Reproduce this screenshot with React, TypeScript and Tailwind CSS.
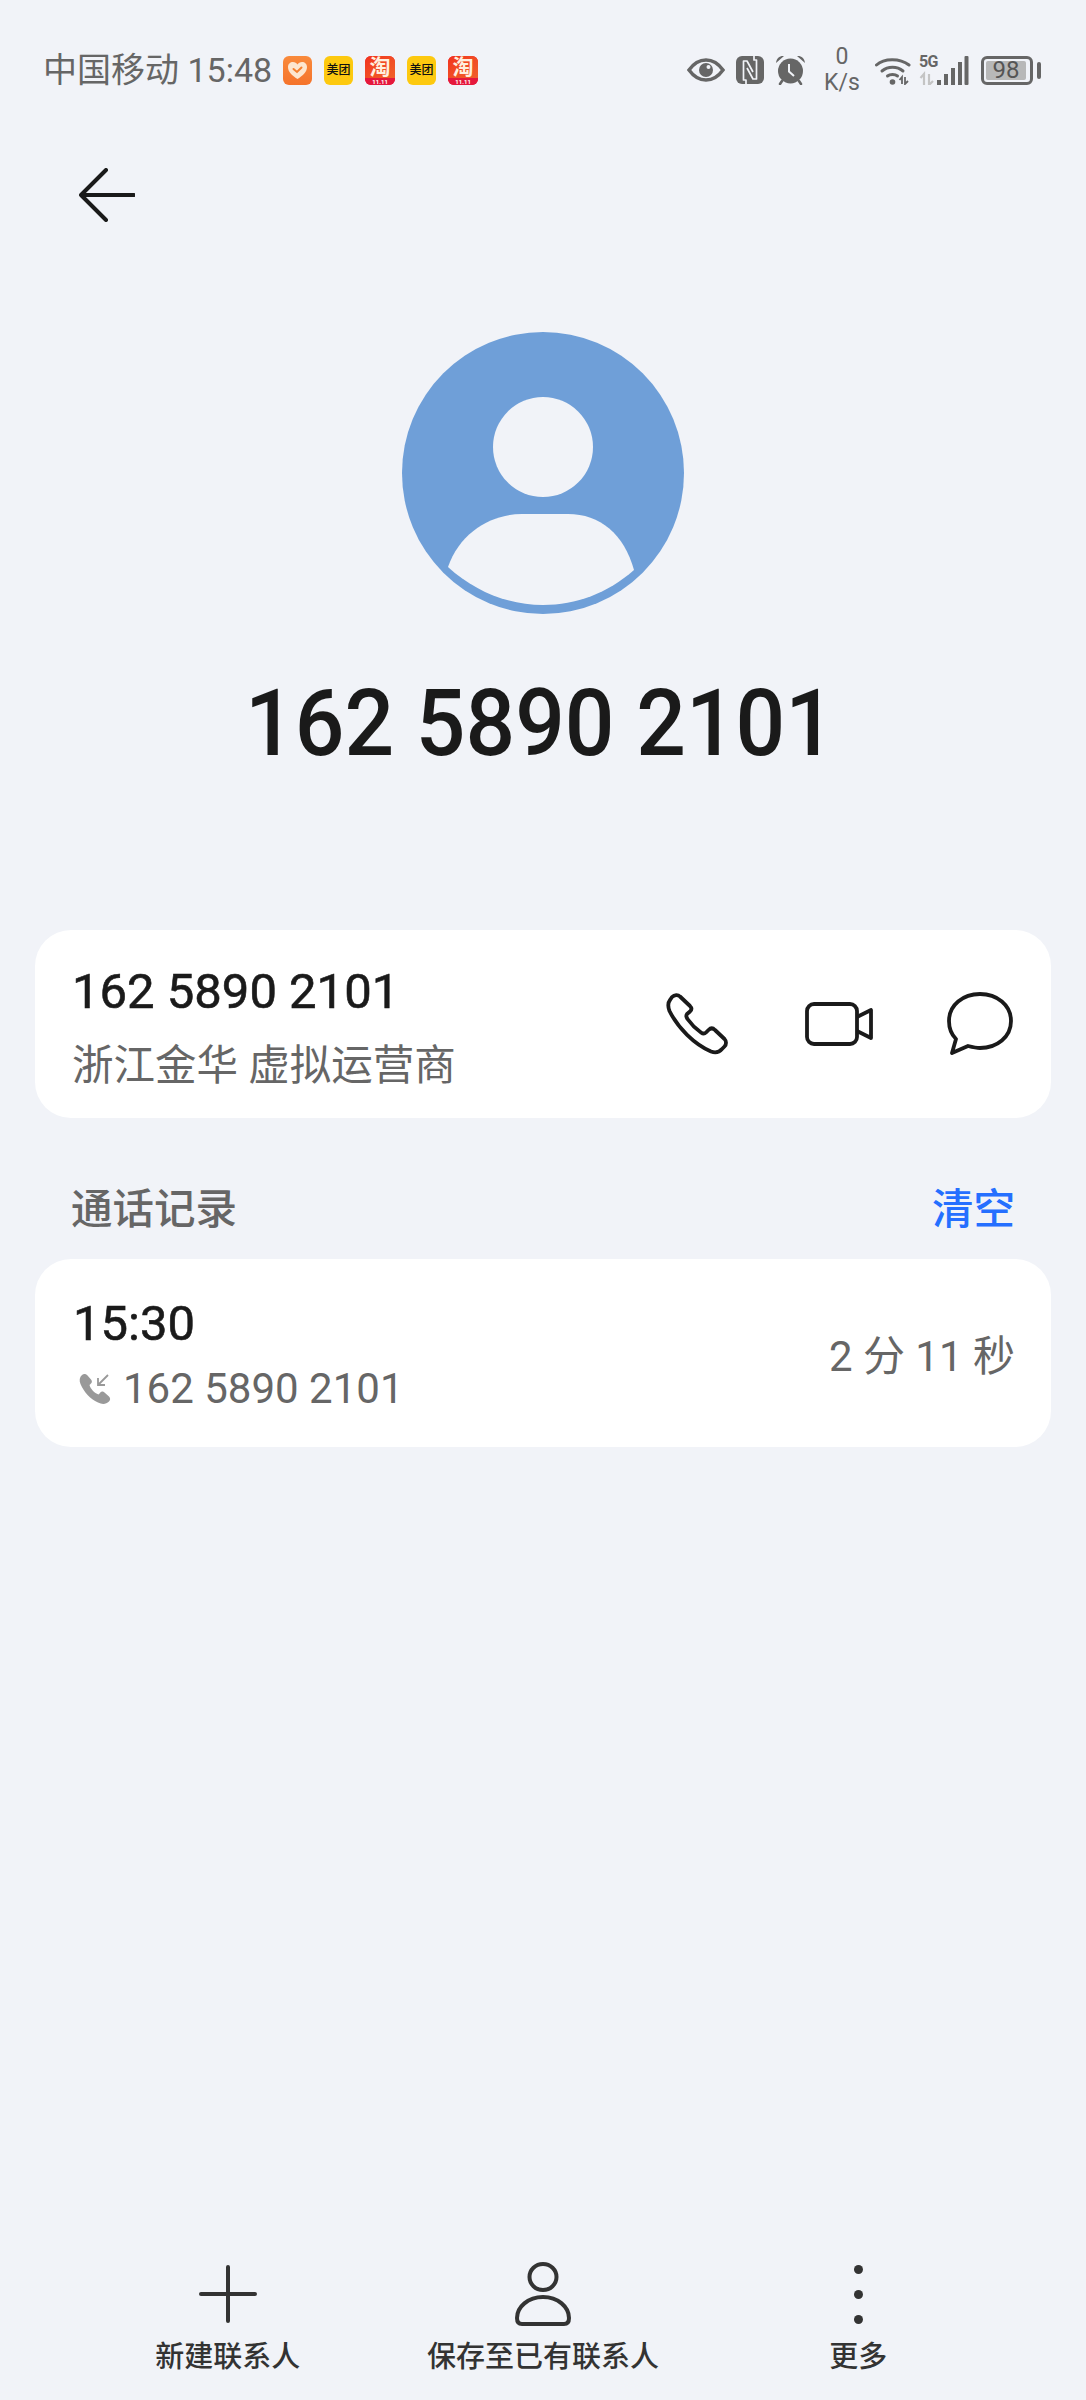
import React from 'react';

const Heart = () => (
  <div className="w-[29px] h-[29px] rounded-[6px] bg-gradient-to-b from-[#f98a3c] to-[#f5732b] flex items-center justify-center">
    <svg width="21" height="19" viewBox="0 0 21 19">
      <path d="M10.5 18 C5 14.5 1 11 1 6 C1 3 3.2 1 6 1 C8 1 9.6 2 10.5 3.4 C11.4 2 13 1 15 1 C17.8 1 20 3 20 6 C20 11 16 14.5 10.5 18 Z" fill="#fde6cf" />
      <path d="M6.5 8 L10 11 L14.5 6.5" fill="none" stroke="#f5802f" strokeWidth="2" strokeLinecap="round" />
    </svg>
  </div>
);

const Meituan = () => (
  <div className="w-[29px] h-[29px] rounded-[6px] bg-[#fdc90f] flex items-center justify-center text-[12px] leading-none font-medium text-[#111] whitespace-nowrap">
    美团
  </div>
);

const Taobao = () => (
  <div className="w-[30px] h-[29px] rounded-[6px] overflow-hidden bg-[#ee2233] flex flex-col items-center">
    <div className="h-[22px] w-full bg-gradient-to-br from-[#f2301e] to-[#f0602a] text-[#ffeede] text-[21px] leading-[22px] font-bold text-center">淘</div>
    <div className="h-[7px] w-full bg-[#e5183c] text-white text-[6px] leading-[7px] font-bold text-center">11.11</div>
  </div>
);

const Eye = () => (
  <svg width="38" height="24" viewBox="0 0 38 24">
    <path d="M2 12 C7 5 12 2 19 2 C26 2 31 5 36 12 C31 19 26 22 19 22 C12 22 7 19 2 12 Z" fill="none" stroke="#666" strokeWidth="3.5" />
    <circle cx="19" cy="12" r="7" fill="#666" />
    <circle cx="21.5" cy="9" r="2" fill="#f1f3f8" />
  </svg>
);

const Nfc = () => (
  <svg width="28" height="28" viewBox="0 0 28 28">
    <rect width="28" height="28" rx="6" fill="#666" />
    <path d="M10 28 V24 H7.5 V5 H11 L17 16" fill="none" stroke="#f1f3f8" strokeWidth="1.7" strokeLinejoin="round" />
    <path d="M18 0 V4 H20.5 V23 H17 L11 12" fill="none" stroke="#f1f3f8" strokeWidth="1.7" strokeLinejoin="round" />
  </svg>
);

const Alarm = () => (
  <svg width="31" height="30" viewBox="0 0 31 30">
    <circle cx="15.5" cy="16" r="12.5" fill="#666" />
    <path d="M1 8 C1.5 3 5 0.5 9 1 Z M30 8 C29.5 3 26 0.5 22 1 Z" fill="#666" />
    <path d="M7 26 L5 29 M24 26 L26 29" stroke="#666" strokeWidth="2.6" strokeLinecap="round" />
    <path d="M14 9 V16.5 L19 21" fill="none" stroke="#f1f3f8" strokeWidth="2" />
  </svg>
);

const Wifi = () => (
  <svg width="36" height="30" viewBox="0 0 36 30">
    <path d="M1.5 10 C9 3 25 3 34 10" fill="none" stroke="#666" strokeWidth="3" strokeLinecap="round" />
    <path d="M7 16 C13 11 22 11 28 16" fill="none" stroke="#666" strokeWidth="3" strokeLinecap="round" />
    <path d="M12.5 21 C15 19 20 19 22.5 21" fill="none" stroke="#666" strokeWidth="3" strokeLinecap="round" />
    <circle cx="17.5" cy="27" r="2.8" fill="#666" />
    <path d="M27 29 V22 L24.5 25 M30 22 V29 L33 26" fill="none" stroke="#666" strokeWidth="1.8" />
  </svg>
);

const Signal = () => (
  <div className="relative w-[50px] h-[30px]">
    <span className="absolute left-0 top-[0px] text-[16px] leading-[14px] font-bold text-[#666] tracking-[-0.8px]">5G</span>
    <svg className="absolute left-0 top-0" width="50" height="30" viewBox="0 0 50 30">
      <path d="M5 30 V19 L1.5 23 M10 19 V30 L14 26" fill="none" stroke="#c4c4c4" strokeWidth="2.2" />
      <rect x="18" y="25" width="4" height="5" fill="#666" />
      <rect x="25" y="19" width="4" height="11" fill="#666" />
      <rect x="32" y="13" width="4" height="17" fill="#666" />
      <rect x="39" y="7" width="4" height="23" fill="#666" />
      <rect x="45.5" y="1" width="4" height="29" rx="1" fill="#666" />
    </svg>
  </div>
);

const Battery = () => (
  <div className="flex items-center gap-[4px]">
    <div className="w-[52px] h-[29px] border-[3px] border-[#666] rounded-[6px] p-[2px] pr-[4px]">
      <div className="h-full w-full bg-[#b8b8b8] rounded-[2px] flex items-center justify-center text-[24px] leading-none text-[#555]">98</div>
    </div>
    <div className="w-[4px] h-[17px] rounded-[2px] bg-[#666]" />
  </div>
);

const BigPhoneIcon = () => (
  <svg width="63" height="63" viewBox="0 0 63 63" fill="none" stroke="#1a1a1a" strokeWidth="3.8" strokeLinejoin="round">
    <path d="M6 4 C8.5 1.5 12 1.5 14 3.5 L24 13 C26 15 25.5 17 24 18.5 L21 21 C20 22.5 20 24 21.5 26 C25 31 30 36 35 39.5 C37 41 38.5 41 40 39.5 L42.5 37 C44.5 35 47 35 49 37 L58.5 46 C60.5 48 60.5 51.5 58.5 53.5 L56 56 C53 59.5 49 60 45 58.5 C28 51 12 35 3.5 18 C2 14 2 9.5 4 7 Z" />
  </svg>
);

const VideoIcon = () => (
  <svg width="68" height="44" viewBox="0 0 68 44" fill="none" stroke="#1a1a1a" strokeWidth="3.8" strokeLinejoin="round">
    <rect x="2" y="2" width="50" height="40" rx="7" />
    <path d="M52 15 L66 8 V36 L52 29" />
  </svg>
);

const ChatIcon = () => (
  <svg width="66" height="64" viewBox="0 0 66 64" fill="none" stroke="#1a1a1a" strokeWidth="3.8" strokeLinejoin="round">
    <path d="M33 2 C50 2 64 13 64 29 C64 45 50 56 33 56 C29 56 25 55 21 54 L5 61 L9 47 C4 42 2 36 2 29 C2 13 16 2 33 2 Z" />
  </svg>
);

const PHONE = '162 5890 2101';

export default function App() {
  return (
    <div className="h-[2400px] w-full bg-[#f1f3f8] flex flex-col font-['Roboto','Noto_Sans_CJK_SC',sans-serif]">
      {/* status bar */}
      <div className="h-[60px] mt-[40px] pl-[43px] pr-[45px] flex items-center justify-between text-[#666]">
        <div className="flex items-center">
          <span className="text-[34px] leading-none mr-[11px] whitespace-nowrap">中国移动 15:48</span>
          <div className="flex items-center gap-[12px]">
            <Heart />
            <Meituan />
            <Taobao />
            <Meituan />
            <Taobao />
          </div>
        </div>
        <div className="flex items-center">
          <Eye />
          <div className="ml-[11px]"><Nfc /></div>
          <div className="ml-[11px]"><Alarm /></div>
          <div className="ml-[18px] w-[36px] flex flex-col items-center text-[23px] leading-[26px]">
            <span>0</span>
            <span>K/s</span>
          </div>
          <div className="ml-[15px]"><Wifi /></div>
          <div className="ml-[8px]"><Signal /></div>
          <div className="ml-[12px]"><Battery /></div>
        </div>
      </div>

      {/* back */}
      <div className="mt-[68px] ml-[79px]">
        <svg width="56" height="54" viewBox="0 0 56 54" fill="none" stroke="#1a1a1a" strokeWidth="4" strokeLinecap="round" strokeLinejoin="round">
          <path d="M27 2 L2 27 L27 52 M2 27 H55" />
        </svg>
      </div>

      {/* avatar */}
      <div className="mt-[110px] flex justify-center">
        <svg width="282" height="282" viewBox="0 0 282 282">
          <circle cx="141" cy="141" r="141" fill="#6f9fd8" />
          <circle cx="141" cy="115" r="50" fill="#f1f3f8" />
          <path d="M46 235 C58 200 90 182 120 182 H166 C198 182 222 202 232 238 C206 261 174 273 141 273 C106 273 72 259 46 235 Z" fill="#f1f3f8" />
        </svg>
      </div>

      <div className="mt-[60px] mr-[6px] h-[100px] text-center text-[92px] leading-[100px] font-medium text-[#1a1a1a] scale-x-[0.95] whitespace-nowrap">{PHONE}</div>

      {/* number card */}
      <div className="mt-[156px] mx-[35px] h-[188px] rounded-[36px] bg-white flex items-center justify-between pl-[37px] pr-[38px]">
        <div className="flex flex-col mt-[7px]">
          <span className="text-[49px] leading-[60px] font-normal text-[#1a1a1a] [-webkit-text-stroke:0.6px_#1a1a1a]">{PHONE}</span>
          <span className="text-[41.5px] leading-[56px] mt-[16px] text-[#666]">浙江金华 虚拟运营商</span>
        </div>
        <div className="flex items-center">
          <BigPhoneIcon />
          <div className="ml-[76px]"><VideoIcon /></div>
          <div className="ml-[74px]"><ChatIcon /></div>
        </div>
      </div>

      {/* section head */}
      <div className="h-[141px] pt-[43px] px-[71px] flex items-center justify-between text-[41.5px]">
        <span className="font-medium text-[#666]">通话记录</span>
        <span className="font-medium text-[#256fff]">清空</span>
      </div>

      {/* call record */}
      <div className="mx-[35px] h-[188px] rounded-[36px] bg-white flex items-center justify-between pl-[37px] pr-[36px]">
        <div className="flex flex-col mt-[4px]">
          <span className="ml-[1px] text-[49px] leading-[60px] font-normal text-[#1a1a1a] [-webkit-text-stroke:0.6px_#1a1a1a]">15:30</span>
          <div className="flex items-center text-[42px] leading-[56px] mt-[7px] text-[#666]">
            <svg className="ml-[7px] mr-[12px]" width="32" height="32" viewBox="0 0 32 32">
              <path d="M3 2 C5 0.5 7 1 8.5 2.5 L12 6.5 C13.5 8 13 10 11.5 11 L10.5 12 C11.5 16 15.5 20 19.5 21.5 L21 20 C22 18.5 24 18 25.5 19.5 L30 23.5 C31.5 25 31.5 27 30 28.5 C27 31.5 23 31.5 19 29.5 C11 26 5 19 1.5 11 C0 7.5 0.5 4 3 2 Z" fill="#999" />
              <path d="M29 2 L19 12 M19 5 V12 H26" fill="none" stroke="#999" strokeWidth="1.8" />
            </svg>
            <span>{PHONE}</span>
          </div>
        </div>
        <span className="text-[42px] mt-[6px] text-[#666]">2 分 11 秒</span>
      </div>

      {/* bottom actions */}
      <div className="mt-auto mb-[26px] px-[70px] grid grid-cols-3 text-[29px] leading-[34px] font-medium text-[#333]">
        <div className="flex flex-col items-center">
          <div className="h-[64px] flex items-center justify-center">
            <svg width="58" height="58" viewBox="0 0 58 58" stroke="#333" strokeWidth="4" strokeLinecap="round">
              <path d="M29 2 V56 M2 29 H56" />
            </svg>
          </div>
          <span className="mt-[14px]">新建联系人</span>
        </div>
        <div className="flex flex-col items-center">
          <svg width="56" height="64" viewBox="0 0 56 64" fill="none" stroke="#333" strokeWidth="4">
            <ellipse cx="28" cy="15" rx="13.5" ry="13" />
            <path d="M2 56 C2 45 13 35 28 35 C43 35 54 45 54 56 C54 60 52 62 49 62 H7 C4 62 2 60 2 56 Z" />
          </svg>
          <span className="mt-[14px]">保存至已有联系人</span>
        </div>
        <div className="flex flex-col items-center">
          <div className="h-[64px] flex flex-col items-center justify-center gap-[16px]">
            <div className="w-[9px] h-[9px] rounded-full bg-[#333]" />
            <div className="w-[9px] h-[9px] rounded-full bg-[#333]" />
            <div className="w-[9px] h-[9px] rounded-full bg-[#333]" />
          </div>
          <span className="mt-[14px]">更多</span>
        </div>
      </div>
    </div>
  );
}
